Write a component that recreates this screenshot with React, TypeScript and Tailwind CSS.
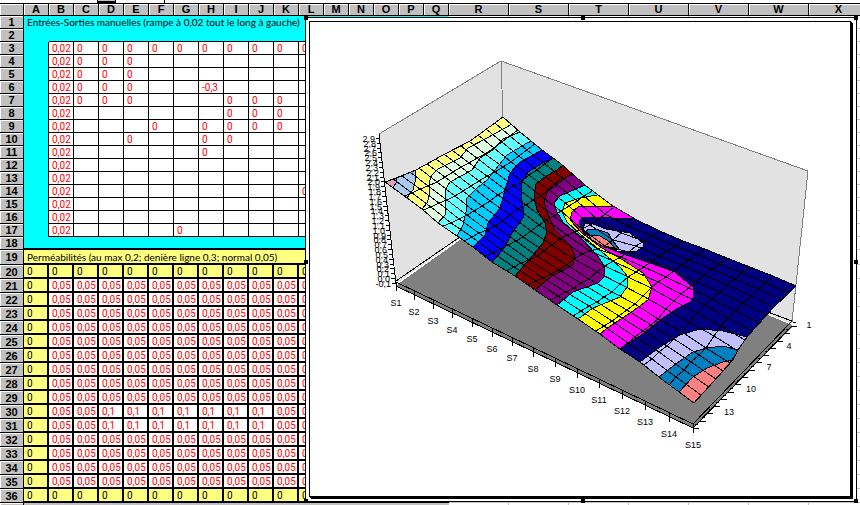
import { clsx } from 'clsx'

type Point = [number, number]

const NARROW_COLUMNS = 'ABCDEFGHIJKLMNOPQ'.split('')
const WIDE_COLUMNS = 'RSTUVWX'.split('')

// Row 3 to 17: manual inputs and outputs, by column letter
const INPUTS: Record<number, Record<string, string>> = {
  3: { C: '0', D: '0', E: '0', F: '0', G: '0', H: '0', I: '0', J: '0', K: '0', L: '0' },
  4: { C: '0', D: '0', E: '0' },
  5: { C: '0', D: '0', E: '0' },
  6: { C: '0', D: '0', E: '0', H: '-0,3' },
  7: { C: '0', D: '0', E: '0', I: '0', J: '0', K: '0' },
  8: { I: '0', J: '0', K: '0' },
  9: { F: '0', H: '0', I: '0', J: '0', K: '0' },
  10: { E: '0', H: '0', I: '0' },
  11: { H: '0' },
  14: { L: '0' },
  17: { G: '0' },
}

function range(from: number, to: number) {
  return Array.from({ length: to - from + 1 }, (_, i) => from + i)
}

function permeability(row: number, col: string) {
  if (row === 20 || row === 36 || col === 'A') return '0'
  if ((row === 30 || row === 31) && col >= 'D' && col <= 'J') return '0,1'
  return '0,05'
}

function RowHeader({ row }: { row: number }) {
  return (
    <th
      scope="row"
      className="border-r border-b border-black bg-[#c0c0c0] p-0 text-center font-['Liberation_Sans',sans-serif] text-[11px] leading-3 font-bold shadow-[inset_1px_1px_0_#fff]"
    >
      {row}
    </th>
  )
}

function WideCells() {
  return (
    <>
      {WIDE_COLUMNS.map((col) => (
        <td key={col} className="border-r border-b border-[#c0c0c0] bg-white p-0" />
      ))}
      <td className="border-b border-[#c0c0c0] bg-white p-0" />
    </>
  )
}

function Sheet() {
  return (
    <table className="w-full table-fixed border-separate border-spacing-0 text-[10px] leading-[11px] whitespace-nowrap">
      <colgroup>
        <col className="w-6" />
        {NARROW_COLUMNS.map((col) => (
          <col key={col} className="w-[25px]" />
        ))}
        {WIDE_COLUMNS.map((col) => (
          <col key={col} className="w-[60px]" />
        ))}
        <col />
      </colgroup>
      <thead>
        <tr className="h-3 font-['Liberation_Sans',sans-serif] text-[11px]">
          <td className="border-r border-b border-black bg-[#c0c0c0] p-0 shadow-[inset_1px_1px_0_#fff]" />
          {[...NARROW_COLUMNS, ...WIDE_COLUMNS].map((col) => (
            <th
              key={col}
              scope="col"
              className="border-r border-b border-black bg-[#c0c0c0] p-0 text-center font-bold shadow-[inset_1px_1px_0_#fff]"
            >
              {col}
            </th>
          ))}
          <td className="border-b border-black bg-[#c0c0c0] p-0" />
        </tr>
      </thead>
      <tbody>
        <tr>
          <RowHeader row={1} />
          <td
            colSpan={17}
            className="border-b border-[#0ff] bg-[#0ff] pt-px pr-0 pb-0 pl-[3px] font-['Lato','Liberation_Sans',sans-serif]"
          >
            Entrées-Sorties manuelles (rampe à 0,02 tout le long à gauche)
          </td>
          <WideCells />
        </tr>
        <tr className="h-[13px]">
          <RowHeader row={2} />
          <td className="bg-[#0ff] p-0" />
          <td colSpan={15} className="border-b border-black bg-[#0ff] p-0" />
          <td className="bg-[#0ff] p-0" />
          <WideCells />
        </tr>
        {range(3, 17).map((row) => (
          <tr key={row}>
            <RowHeader row={row} />
            <td className="border-r border-black bg-[#0ff] p-0" />
            {NARROW_COLUMNS.slice(1, 16).map((col) => (
              <td key={col} className="border-r border-b border-black bg-white pt-px pr-0 pb-0 pl-[3px] text-[#f00]">
                {col === 'B' ? '0,02' : INPUTS[row]?.[col]}
              </td>
            ))}
            <td className="bg-[#0ff] p-0" />
            <WideCells />
          </tr>
        ))}
        <tr className="h-[13px]">
          <RowHeader row={18} />
          <td colSpan={17} className="border-b-2 border-black bg-[#0ff] p-0" />
          <WideCells />
        </tr>
        <tr className="h-[15px]">
          <RowHeader row={19} />
          <td
            colSpan={17}
            className="border-b-2 border-black bg-[#ffff80] pt-px pr-0 pb-0 pl-[3px] font-['Lato','Liberation_Sans',sans-serif]"
          >
            Perméabilités (au max 0,2; denière ligne 0,3; normal 0,05)
          </td>
          <WideCells />
        </tr>
        {range(20, 36).map((row) => (
          <tr key={row}>
            <RowHeader row={row} />
            {NARROW_COLUMNS.map((col) => {
              const edge = row === 20 || row === 36 || col === 'A'
              return (
                <td
                  key={col}
                  className={clsx(
                    'border-r-2 border-b-2 border-black pt-px pr-0 pb-0 pl-[3px]',
                    edge ? 'bg-[#ffff80]' : 'bg-white text-[#f00]'
                  )}
                >
                  {permeability(row, col)}
                </td>
              )
            })}
            <WideCells />
          </tr>
        ))}
        <tr className="h-[13px]">
          <td className="border-r border-b border-black bg-[#c0c0c0] p-0 shadow-[inset_1px_1px_0_#fff]" />
          <td colSpan={17} className="bg-[#c0c0c0] p-0" />
          <WideCells />
        </tr>
      </tbody>
    </table>
  )
}

const FRONT: Point[] = [
  [385, 182], [407, 198], [422, 209], [438, 223], [457, 236], [473, 247], [492, 262], [515, 276],
  [535, 290], [557, 305], [578, 319], [600, 334], [620, 349], [640, 362], [659, 377], [679, 392], [694, 403],
]
const BACK: Point[] = [
  [503, 117], [520, 132], [542, 150], [560, 163], [568, 170], [585, 185], [598, 195], [613, 206],
  [637, 220], [660, 231], [683, 241], [705, 249], [727, 258], [750, 267], [773, 276], [796, 286],
]
const LEFT: Point[] = [[385, 182], [396, 178], [416, 170], [443, 155], [470, 141], [488, 128], [503, 117]]
const RIGHT: Point[] = [[694, 403], [733, 360], [738, 350], [747, 337], [773, 308], [796, 286]]

const OUTLINE: Point[] = [...LEFT, ...BACK, ...[...RIGHT].reverse(), ...[...FRONT].reverse()]

// Upper limit of each colour, drawn from the lowest level up to the highest
const BANDS: { color: string; line: Point[] }[] = [
  {
    color: '#ff00ff',
    line: [
      [620, 349], [640, 336], [660, 320], [678, 308], [690, 302], [694, 297], [693, 287], [675, 272], [650, 263],
      [635, 258], [620, 253], [597, 243], [583, 232], [579, 222], [582, 218], [588, 217], [637, 219],
    ],
  },
  {
    color: '#ffff00',
    line: [
      [600, 334], [606, 329], [630, 313], [648, 300], [652, 287], [643, 273], [623, 260], [602, 248],
      [582, 233], [570, 220], [572, 212], [578, 207], [590, 206], [613, 206],
    ],
  },
  {
    color: '#00ffff',
    line: [
      [578, 319], [593, 308], [620, 297], [627, 287], [628, 277], [620, 267], [602, 252], [580, 234],
      [567, 222], [562, 212], [565, 203], [580, 198], [597, 195],
    ],
  },
  {
    color: '#800080',
    line: [
      [557, 305], [573, 292], [598, 283], [604, 277], [605, 267], [597, 255], [580, 237], [563, 222],
      [557, 212], [554, 203], [560, 196], [585, 185],
    ],
  },
  {
    color: '#800000',
    line: [
      [535, 290], [552, 276], [573, 265], [575, 255], [570, 245], [555, 230], [547, 212], [544, 202],
      [548, 190], [560, 180], [574, 174],
    ],
  },
  {
    color: '#008080',
    line: [
      [515, 276], [527, 262], [543, 243], [547, 232], [545, 223], [537, 210], [534, 197], [536, 184],
      [546, 176], [557, 170], [563, 165],
    ],
  },
  {
    color: '#0000ff',
    line: [
      [492, 262], [503, 250], [512, 233], [523, 218], [523, 207], [521, 195], [522, 183], [528, 172],
      [543, 163], [553, 158],
    ],
  },
  { color: '#00ccff', line: [[473, 247], [485, 235], [488, 223], [500, 208], [505, 190], [510, 173], [520, 162], [542, 150]] },
  {
    color: '#66ffff',
    line: [
      [457, 236], [463, 225], [466, 212], [467, 198], [477, 188], [487, 180], [495, 170], [507, 155],
      [527, 143], [532, 141],
    ],
  },
  {
    color: '#e0ffe0',
    line: [
      [438, 223], [445, 215], [446, 205], [445, 190], [450, 182], [472, 170], [480, 158], [493, 150],
      [503, 139], [520, 132],
    ],
  },
  {
    color: '#ffff80',
    line: [
      [422, 209], [427, 203], [430, 193], [429, 183], [432, 175], [438, 169], [460, 158], [468, 148],
      [487, 138], [512, 124],
    ],
  },
  { color: '#a6caf0', line: [[407, 198], [413, 190], [415, 182], [416, 170]] },
  { color: '#e0a0c0', line: [[393, 188], [396, 183], [396, 178]] },
]

// Low ground: the well in the middle, then the near corner
const HOLLOWS: { color: string; points: Point[] }[] = [
  {
    color: '#c0c0ff',
    points: [[583, 228], [585, 223], [591, 223], [606, 229], [630, 233], [643, 243], [643, 247], [637, 251], [617, 251], [603, 246], [588, 237]],
  },
  { color: '#0080c0', points: [[586, 232], [588, 229], [596, 229], [608, 233], [613, 241], [619, 249], [610, 249], [594, 241]] },
  { color: '#ff8080', points: [[588, 235], [600, 236], [610, 242], [615, 249], [604, 247], [592, 240]] },
  { color: '#c0c0ff', points: [[640, 362], [660, 347], [680, 335], [700, 329], [723, 331], [747, 337], [770, 430], [640, 430]] },
  { color: '#0080c0', points: [[659, 377], [677, 363], [693, 352], [707, 348], [723, 346], [738, 350], [770, 430], [659, 430]] },
  { color: '#ff8080', points: [[679, 392], [693, 377], [707, 368], [723, 362], [733, 360], [770, 430], [679, 430]] },
]

const FRONT_X = [385, 404, 423, 443, 464, 485, 506, 528, 550, 573, 596, 620, 644, 669, 694]
const BACK_X = [503, 518, 535, 553, 572, 592, 613, 636, 660, 683, 705, 727, 750, 773, 796]
const TICK_X = [396, 414, 433, 452, 472, 492, 512, 533, 555, 577, 599, 622, 645, 669, 693]

const toPoints = (points: Point[]) => points.map((p) => p.join(',')).join(' ')

function at(line: Point[], x: number): Point {
  for (let i = 1; i < line.length; i++) {
    const [x0, y0] = line[i - 1]
    const [x1, y1] = line[i]
    if (x <= x1) return [x, y0 + ((x - x0) / (x1 - x0)) * (y1 - y0)]
  }
  return line[line.length - 1]
}

// Node of the surface, blended from its four edges and pulled down at the well
function node(s: number, c: number): Point {
  const u = s / 14
  const v = c / 14
  const front = at(FRONT, FRONT_X[s])
  const back = at(BACK, BACK_X[s])
  const left = at(LEFT, 385 + 118 * v)
  const right = at(RIGHT, 694 + 102 * v)
  const blend = (k: 0 | 1) =>
    (1 - v) * front[k] + v * back[k] + (1 - u) * left[k] + u * right[k] -
    (1 - u) * ((1 - v) * FRONT[0][k] + v * BACK[0][k]) -
    u * ((1 - v) * RIGHT[0][k] + v * BACK[BACK.length - 1][k])
  const x = blend(0)
  const y = blend(1)
  const pull = 8 * Math.exp(-((x - 602) ** 2) / 500 - (y - 232) ** 2 / 500)
  return [Math.round(x), Math.round(y + pull)]
}

const NODES = range(0, 14).map((s) => range(0, 14).map((c) => node(s, c)))

function SurfaceChart() {
  return (
    <svg
      viewBox="310 22 540 474"
      className="block h-auto w-full font-['Liberation_Sans',sans-serif]"
      shapeRendering="crispEdges"
      fill="none"
      strokeWidth="1"
    >
      <clipPath id="surface">
        <polygon points={toPoints(OUTLINE)} />
      </clipPath>

      <polygon points="379,134 501,61 808,171 792,324 503,208 397,283" fill="#e2e2e2" />
      <polyline points="379,134 501,61 808,171 792,322" stroke="#808080" />
      <path d="M501 61 503 117" stroke="#808080" />

      <polygon points="398,284 505,208 792,325 792,327 693,428 396,286" fill="#808080" />
      <path d="M396 281 470 230M765 311 792 321" stroke="#000" />
      <path d="M396 282 693 424 792 321M396 286 693 428 792 326" stroke="#000" />

      <g clipPath="url(#surface)" stroke="#000">
        <rect x="380" y="110" width="420" height="300" fill="#000080" />
        {BANDS.map(({ color, line }) => {
          const first = line[0]
          const last = line[line.length - 1]
          return (
            <polygon
              key={color}
              points={toPoints([...line, [last[0], 60], [360, 60], [360, 430], [first[0], 430]])}
              fill={color}
            />
          )
        })}
        {HOLLOWS.map(({ color, points }, i) => (
          <polygon key={i} points={toPoints(points)} fill={color} />
        ))}
        {NODES.map((line, i) => (
          <polyline key={`s${i}`} points={toPoints(line)} />
        ))}
        {range(1, 13).map((c) => (
          <polyline key={`c${c}`} points={toPoints(NODES.map((line) => line[c]))} />
        ))}
      </g>
      <polygon points={toPoints(OUTLINE)} stroke="#000" />

      <path d="M379 134 396 284" stroke="#000" />
      <g fontSize="9" fill="#000">
        {range(0, 30).map((i) => {
          const y = Math.round(138 + i * 4.83)
          const x = Math.round(380 + (i * 16) / 30)
          return (
            <g key={i}>
              <path d={`M${x - 4} ${y}H${x}`} stroke="#000" />
              <text x={x - 5} y={y + 4} textAnchor="end">
                {((29 - i) / 10).toFixed(1).replace('.', ',')}
              </text>
            </g>
          )
        })}
        {TICK_X.map((x, i) => {
          const y = Math.round(282 + ((x - 396) * 142) / 297)
          return (
            <g key={x}>
              <path d={`M${x} ${y}V${y + 9}`} stroke="#000" />
              <text x={x} y={y + 24} textAnchor="middle">
                S{i + 1}
              </text>
            </g>
          )
        })}
        {range(0, 14).map((i) => {
          const x = Math.round(694 + i * 7)
          const y = Math.round(428 - (i * 102) / 14)
          return <path key={i} d={`M${x - 1} ${y}H${x + 5}M${x + 1} ${y - 4}H${x + 4}`} stroke="#000" />
        })}
        <g textAnchor="middle">
          <text x="729" y="415">13</text>
          <text x="751" y="392">10</text>
          <text x="769" y="370">7</text>
          <text x="789" y="349">4</text>
          <text x="809" y="328">1</text>
        </g>
      </g>
    </svg>
  )
}

const HANDLES = [
  '-top-[2px] -left-[2px]',
  '-top-[2px] left-1/2',
  '-top-[2px] -right-[2px]',
  'top-1/2 -left-[2px]',
  'top-1/2 -right-[2px]',
  '-bottom-[2px] -left-[2px]',
  '-bottom-[2px] left-1/2',
  '-bottom-[2px] -right-[2px]',
]

function ChartWindow() {
  return (
    <div className="absolute top-[17px] right-[3px] left-[305px] border border-black bg-white pt-[3px] pr-[5px] pb-1 pl-[3px]">
      <div className="border border-black shadow-[1px_1px_0_#000,2px_2px_0_#000]">
        <SurfaceChart />
      </div>
      {HANDLES.map((place) => (
        <span key={place} className={clsx('absolute size-1 bg-black', place)} />
      ))}
    </div>
  )
}

export default function App() {
  return (
    <main className="relative h-screen overflow-hidden bg-white font-['Roboto','Liberation_Sans',sans-serif] text-black">
      <div className="flex h-1 border-b border-black">
        <div className="w-[97px]" />
        <button type="button" aria-label="Fonction" className="w-[19px] border-x border-b-2 border-black bg-[#c0c0c0]" />
        <div className="w-[49px] border-r border-black" />
      </div>
      <Sheet />
      <ChartWindow />
    </main>
  )
}
